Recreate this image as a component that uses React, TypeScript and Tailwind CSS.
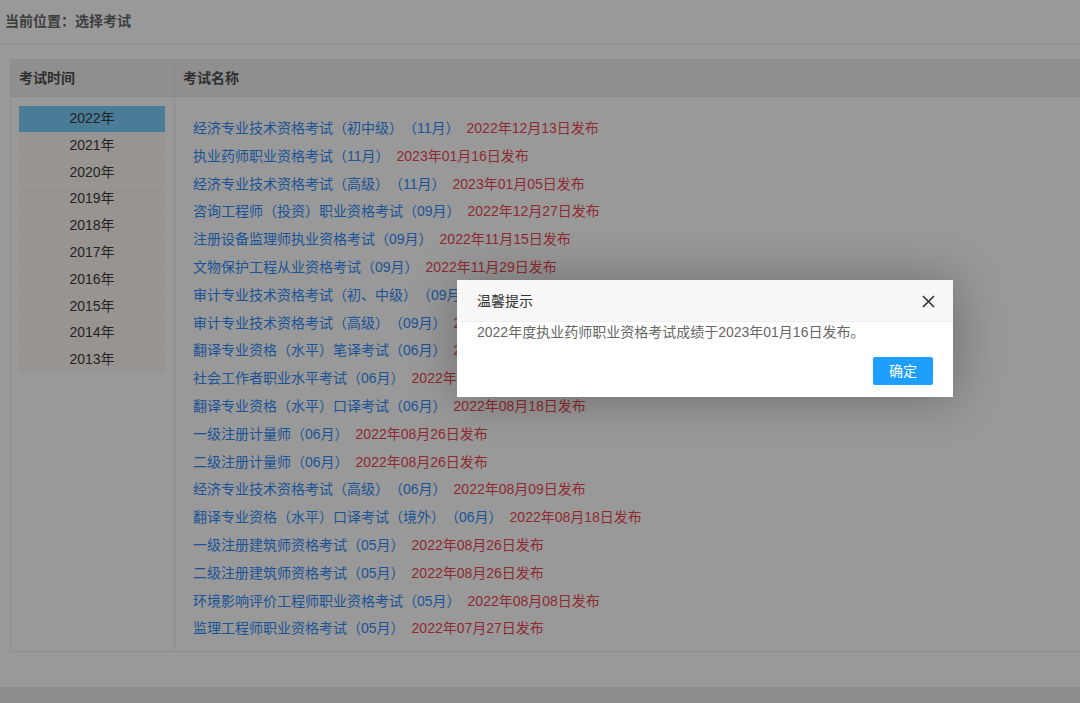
import React from "react";

const years = ["2022年", "2021年", "2020年", "2019年", "2018年", "2017年", "2016年", "2015年", "2014年", "2013年"];

const exams: [string, string][] = [
  ["经济专业技术资格考试（初中级）（11月）", "2022年12月13日发布"],
  ["执业药师职业资格考试（11月）", "2023年01月16日发布"],
  ["经济专业技术资格考试（高级）（11月）", "2023年01月05日发布"],
  ["咨询工程师（投资）职业资格考试（09月）", "2022年12月27日发布"],
  ["注册设备监理师执业资格考试（09月）", "2022年11月15日发布"],
  ["文物保护工程从业资格考试（09月）", "2022年11月29日发布"],
  ["审计专业技术资格考试（初、中级）（09月）", "2022年11月18日发布"],
  ["审计专业技术资格考试（高级）（09月）", "2022年11月18日发布"],
  ["翻译专业资格（水平）笔译考试（06月）", "2022年08月18日发布"],
  ["社会工作者职业水平考试（06月）", "2022年08月17日发布"],
  ["翻译专业资格（水平）口译考试（06月）", "2022年08月18日发布"],
  ["一级注册计量师（06月）", "2022年08月26日发布"],
  ["二级注册计量师（06月）", "2022年08月26日发布"],
  ["经济专业技术资格考试（高级）（06月）", "2022年08月09日发布"],
  ["翻译专业资格（水平）口译考试（境外）（06月）", "2022年08月18日发布"],
  ["一级注册建筑师资格考试（05月）", "2022年08月26日发布"],
  ["二级注册建筑师资格考试（05月）", "2022年08月26日发布"],
  ["环境影响评价工程师职业资格考试（05月）", "2022年08月08日发布"],
  ["监理工程师职业资格考试（05月）", "2022年07月27日发布"],
];

export default function App() {
  return (
    <div
      className="relative h-[703px] w-[1080px] overflow-hidden bg-[#dbdbdb] text-[14px] [text-spacing-trim:space-all]"
      style={{ fontFamily: '"Liberation Sans", "Noto Sans CJK SC", sans-serif' }}
    >
      <div className="h-[44px] border-b border-[#cccccc] px-[5px] font-bold leading-[42px] text-[#5a5a5a]">
        当前位置：选择考试
      </div>

      <div className="pl-[10px] pt-[15px]">
        <div className="w-[1100px] border border-[#cbcbcb]">
          <div className="flex h-[37px] border-b border-[#c6c6c6] bg-[#cdcdcd] font-bold leading-[36px] text-[#444]">
            <div className="w-[164px] border-r border-[#c6c6c6] pl-[8px]">考试时间</div>
            <div className="pl-[8px]">考试名称</div>
          </div>
          <div className="flex">
            <div className="w-[164px] border-r border-[#cbcbcb] pl-[8px] pt-[9px]">
              {years.map((y, i) => (
                <div
                  key={y}
                  className={
                    "mb-[1px] h-[25.8px] w-[146px] text-center leading-[25.8px] text-[#333] " +
                    (i === 0 ? "bg-[#6ab0d8]" : "bg-[#dad5d0]")
                  }
                >
                  {y}
                </div>
              ))}
            </div>
            <div className="pb-[8px] pl-[18px] pt-[18px]">
              {exams.map(([name, date]) => (
                <div key={name} className="flex h-[27.8px] items-center whitespace-nowrap leading-[27.8px]">
                  <span className="text-[#2a78d6]">{name}</span>
                  <span className="ml-[7px] text-[#cc3d47]">{date}</span>
                </div>
              ))}
            </div>
          </div>
        </div>
      </div>

      <div className="absolute bottom-0 left-0 h-[16px] w-full bg-[#cbcbcb]" />

      <div className="absolute inset-0 bg-black/30" />

      <div className="absolute left-[457px] top-[280px] w-[496px] bg-white shadow-[1px_1px_50px_rgba(0,0,0,0.3)]">
        <div className="relative h-[42px] border-b border-[#eeeeee] bg-[#f8f8f8] pl-[20px] leading-[42px] text-[#333]">
          温馨提示
          <svg
            className="absolute right-[18px] top-[15px]"
            width="13"
            height="13"
            viewBox="0 0 13 13"
            fill="none"
            stroke="#2d2d2d"
            strokeWidth="1.6"
          >
            <path d="M1 1L12 12M12 1L1 12" />
          </svg>
        </div>
        <div className="h-[30px] px-[20px] leading-[20px] text-[#666]">
          2022年度执业药师职业资格考试成绩于2023年01月16日发布。
        </div>
        <div className="flex justify-end pb-[12px] pr-[20px] pt-[5px]">
          <button className="h-[28px] w-[60px] rounded-[2px] bg-[#1e9fff] text-[14px] leading-[28px] text-white">
            确定
          </button>
        </div>
      </div>
    </div>
  );
}
